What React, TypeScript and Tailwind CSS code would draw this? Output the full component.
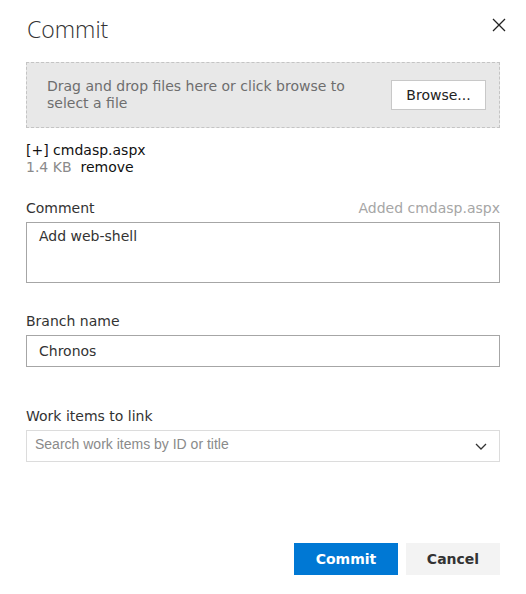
import { useState } from 'react';

const App = () => {
    const [comment, setComment] = useState('Add web-shell');
    const [branch, setBranch] = useState('Chronos');

    return (
        <div className="w-[526px] h-[594px] bg-white font-['DejaVu_Sans',sans-serif] text-[#333] flex flex-col px-[26px]">
            <div className="flex items-start justify-between pt-[13px]">
                <h1 className="font-['Open_Sans',sans-serif] text-[23px] font-light leading-[32px] pl-px text-[#333]">Commit</h1>
                <button className="mt-[4px] mr-[-7px] text-[#333]" aria-label="Close">
                    <svg width="16" height="16" viewBox="0 0 16 16">
                        <path d="M2 2L14 14M14 2L2 14" stroke="#222" strokeWidth="1.3" fill="none" />
                    </svg>
                </button>
            </div>

            <div className="mt-[17px] h-[66px] bg-[#e8e8e8] border border-dashed border-[#c4c4c4] flex items-center justify-between pl-[20px] pr-[13px]">
                <p className="text-[14px] leading-[17px] text-[#6e6e6e] w-[310px]">
                    Drag and drop files here or click browse to select a file
                </p>
                <button className="w-[95px] h-[30px] bg-white border border-[#c8c8c8] text-[14px] text-[#222]">
                    Browse...
                </button>
            </div>

            <div className="mt-[14px] text-[14px] leading-[17px]">
                <div className="text-[#111]">[+]&nbsp;cmdasp.aspx</div>
                <div>
                    <span className="text-[#8a8a8a]">1.4 KB</span>
                    <span className="ml-[9px] text-[#111]">remove</span>
                </div>
            </div>

            <div className="mt-[24px] flex items-end justify-between text-[14px] leading-[17px]">
                <label>Comment</label>
                <span className="text-[#a6a6a6]">Added cmdasp.aspx</span>
            </div>
            <textarea
                value={comment}
                onChange={e => setComment(e.target.value)}
                className="mt-[5px] h-[61px] border border-[#a6a6a6] px-[12px] py-[5px] text-[14px] leading-[17px] text-[#333] resize-none outline-none"
            />

            <label className="mt-[30px] text-[14px] leading-[17px]">Branch name</label>
            <input
                value={branch}
                onChange={e => setBranch(e.target.value)}
                className="mt-[5px] h-[32px] border border-[#a6a6a6] px-[12px] text-[14px] text-[#333] outline-none"
            />

            <label className="mt-[41px] text-[14px] leading-[17px]">Work items to link</label>
            <div className="mt-[5px] h-[32px] border border-[#dcdcdc] flex items-center justify-between pl-[8px] pr-[11px]">
                <span className="font-['Liberation_Sans',sans-serif] text-[14px] text-[#8a8a8a] pb-[3px]">
                    Search work items by ID or title
                </span>
                <svg width="14" height="14" viewBox="0 0 14 14">
                    <path d="M2 5L7 10L12 5" stroke="#333" strokeWidth="1.3" fill="none" />
                </svg>
            </div>

            <div className="mt-[81px] flex justify-end gap-[8px]">
                <button className="w-[104px] h-[32px] bg-[#0078d4] text-white text-[14px] font-bold">Commit</button>
                <button className="w-[94px] h-[32px] bg-[#f3f3f3] text-[#333] text-[14px] font-bold">Cancel</button>
            </div>
        </div>
    );
};

export default App;
